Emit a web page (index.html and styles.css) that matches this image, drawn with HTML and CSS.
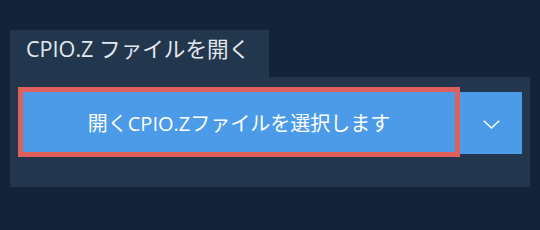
FILE: index.html
```html
<!DOCTYPE html>
<html lang="ja">
<head>
    <meta charset="UTF-8">
    <title>CPIO.Z ファイルを開く</title>
    <link rel="stylesheet" href="styles.css">
</head>
<body>
    <div class="opener">
        <div class="tab">CPIO.Z ファイルを開く</div>
        <div class="panel">
            <button class="pick-btn">開くCPIO.Zファイルを選択します</button>
            <button class="more-btn" aria-label="その他">
                <svg width="17" height="9" viewBox="0 0 17 9">
                    <path d="M0.7 0.7 L8.5 8 L16.3 0.7" fill="none" stroke="#fff" stroke-width="1.4"/>
                </svg>
            </button>
        </div>
    </div>
</body>
</html>
```

FILE: styles.css
```css
body {
    margin: 0;
    background: #12233a;
    font-family: "Open Sans", "Noto Sans CJK JP", sans-serif;
    width: 540px;
    height: 230px;
}
.opener {
    padding: 30px 10px 0 10px;
}
.tab {
    display: inline-block;
    width: 259px;
    height: 47px;
    box-sizing: border-box;
    padding: 4px 0 0 16px;
    background: #22374e;
    color: #e4e8ee;
    font-size: 21.6px;
    line-height: 30px;
    white-space: nowrap;
}
.panel {
    display: flex;
    align-items: flex-start;
    height: 110px;
    box-sizing: border-box;
    padding: 10px 8px 0 8px;
    background: #22374e;
}
.pick-btn {
    width: 442px;
    height: 70px;
    border: 5px solid #df605a;
    background: #4b9be8;
    color: #fff;
    font-family: inherit;
    font-size: 20px;
    padding: 0;
    cursor: pointer;
    white-space: nowrap;
}
.more-btn {
    margin-top: 5px;
    width: 62px;
    height: 62px;
    border: none;
    background: #4b9be8;
    padding: 0;
    padding-top: 3px;
    cursor: pointer;
}
```
